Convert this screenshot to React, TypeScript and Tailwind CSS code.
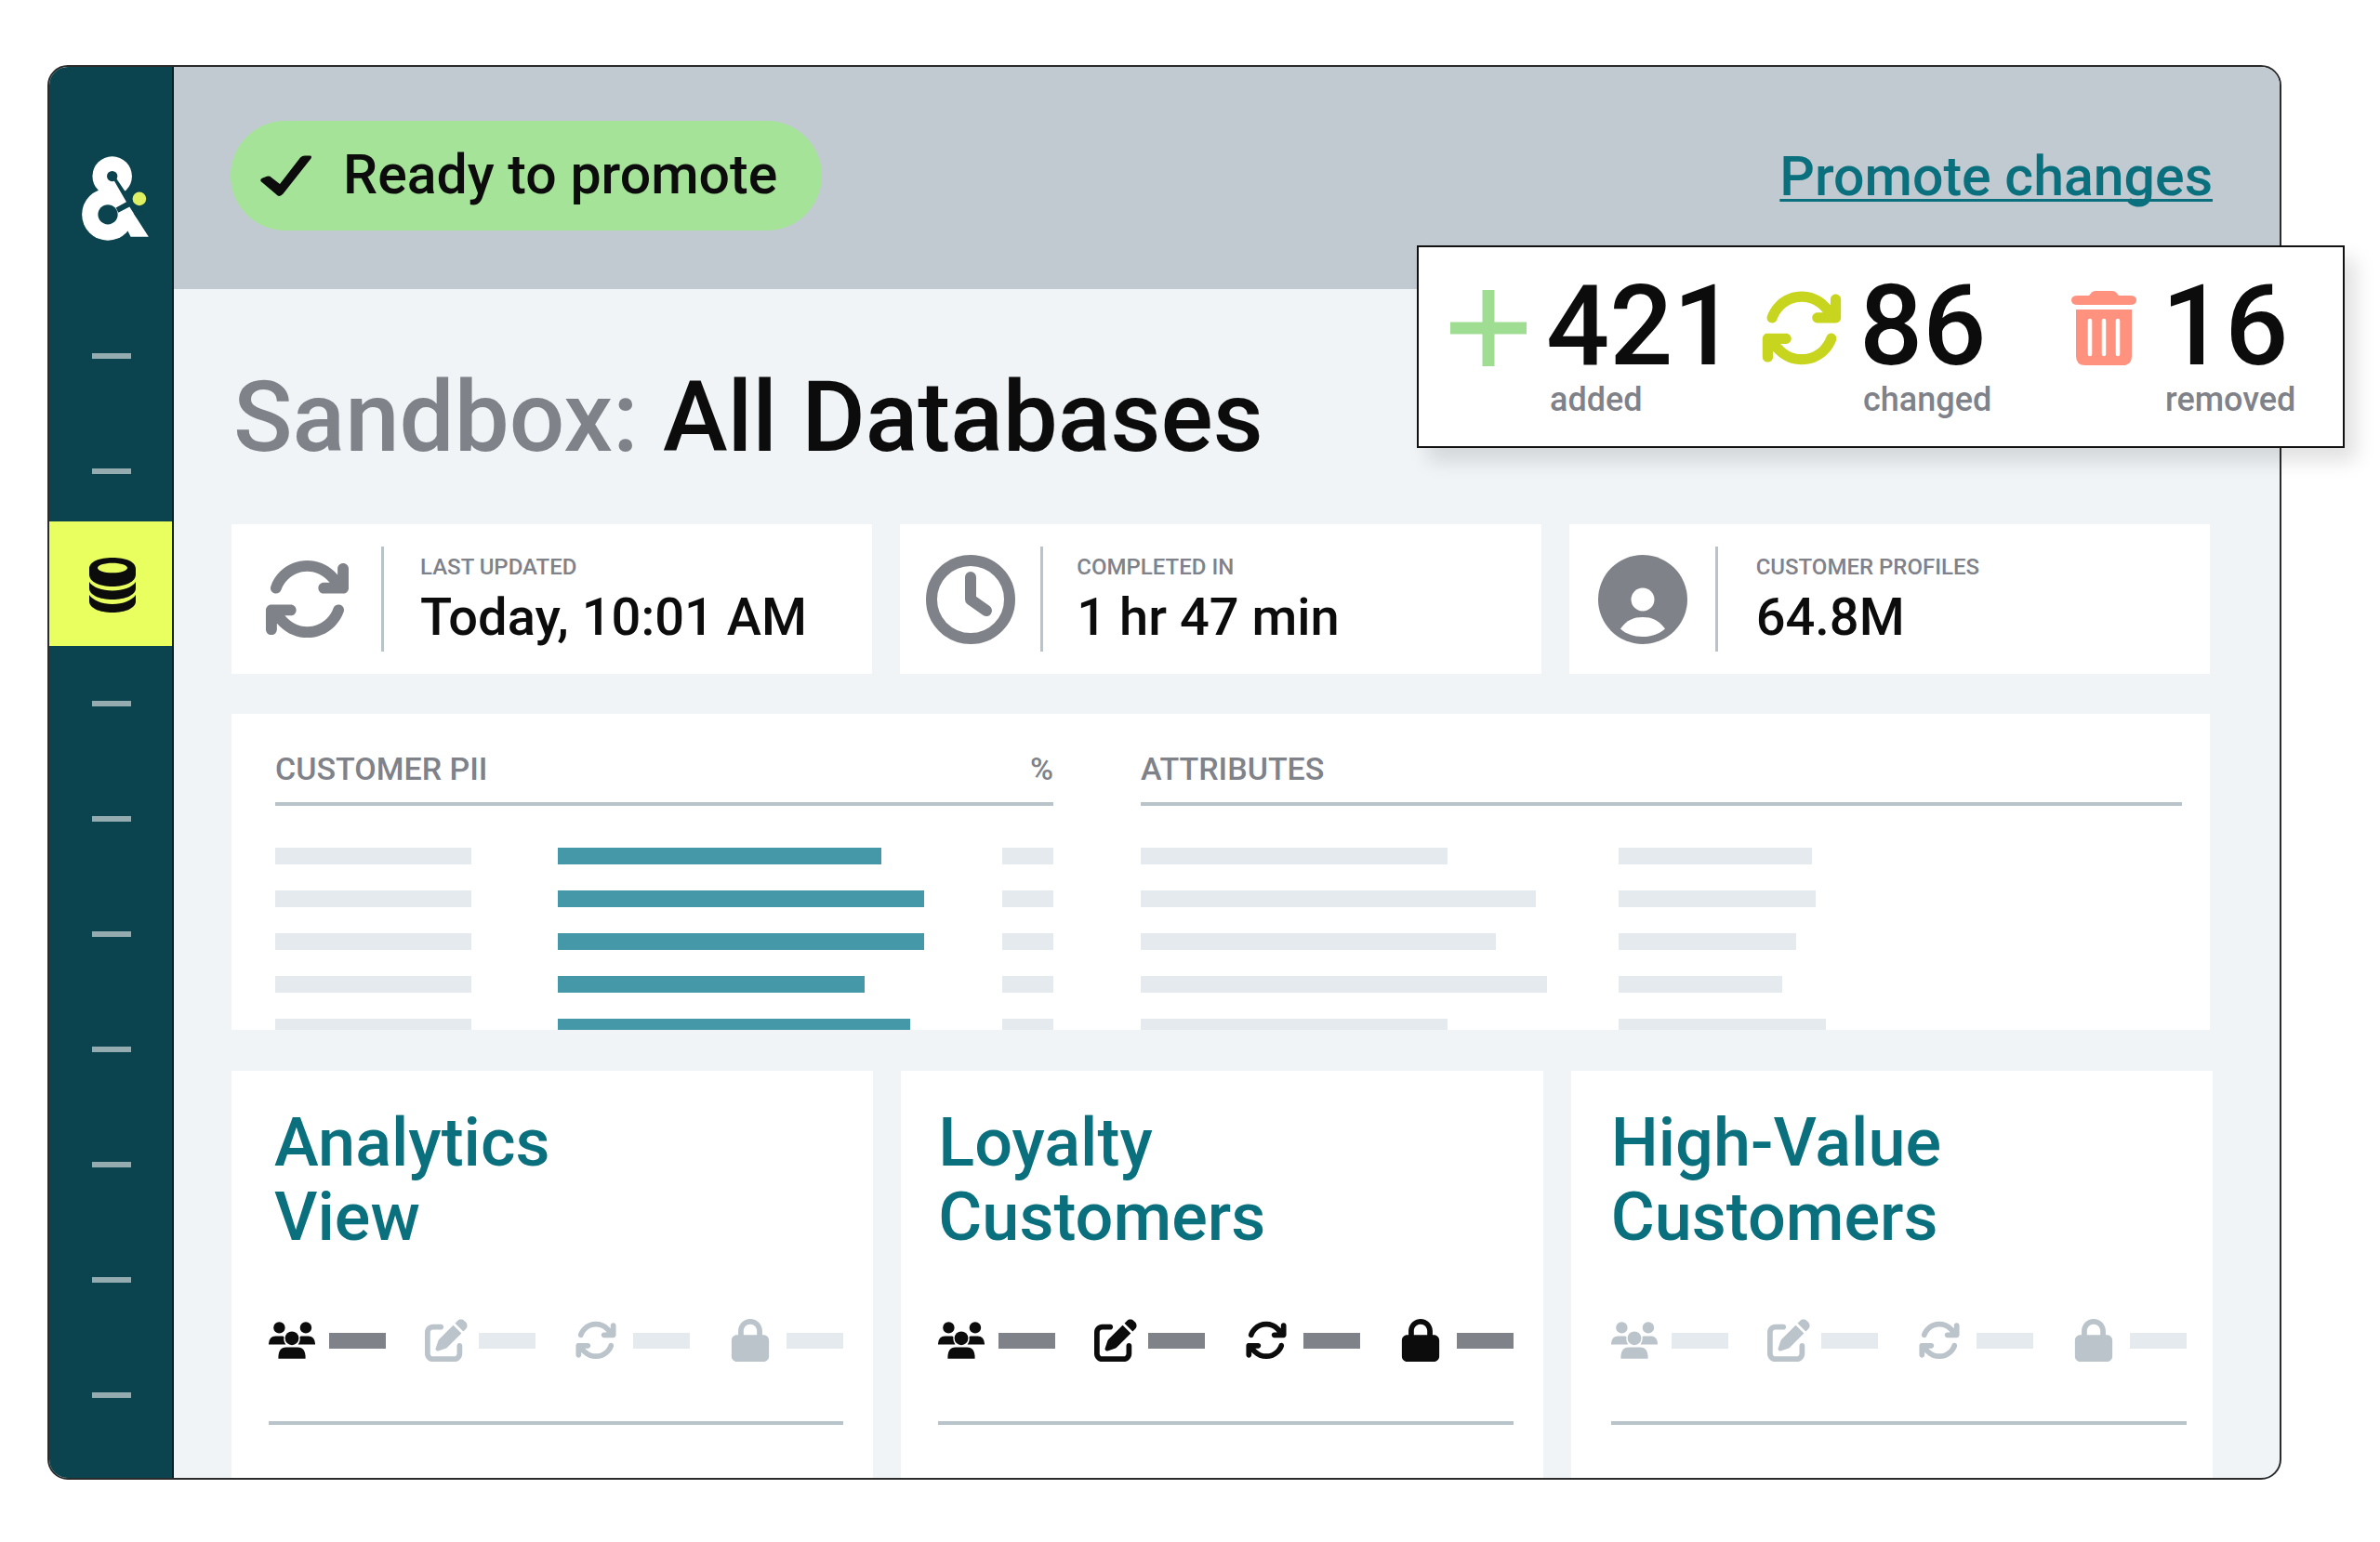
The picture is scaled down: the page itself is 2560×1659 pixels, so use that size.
import { ReactNode } from "react";
import { FaArrowsRotate, FaLock, FaPenToSquare } from "react-icons/fa6";

type IconProps = { className?: string };

function Logo({ className }: IconProps) {
  return (
    <svg viewBox="24 24 216 274" className={className} aria-label="Home">
      <g fill="#fff">
        <circle cx="122" cy="89" r="64" />
        <circle cx="108" cy="213" r="84" />
        <path d="M176 186L240 285H182L172 266L150 220z" />
      </g>
      <g fill="#0b444e">
        <path d="M124 96L168 172L134 191L142 207L178 188L200 222L250 180L163 137L134 94z" />
        <circle cx="122" cy="89" r="17" />
        <circle cx="108" cy="213" r="32" />
      </g>
      <circle cx="210" cy="162" r="22" fill="#dff062" />
    </svg>
  );
}

function DatabaseIcon({ className }: IconProps) {
  return (
    <svg viewBox="0 0 50 59" fill="currentColor" className={className}>
      <path
        fillRule="evenodd"
        d="M0 12C0 4 11 0 25 0S50 4 50 12V18C50 26 39 31 25 31S0 26 0 18zM9 11C9 14 16 16.300 25 16.300S41 14 41 11S34 5.700 25 5.700S9 8 9 11z"
      />
      <path d="M0 26C4 32 14 35.500 25 35.500S46 32 50 26V33C50 40 39 45 25 45S0 40 0 33z" />
      <path d="M0 40C4 46 14 50 25 50S46 46 50 40V47C50 54 39 59 25 59S0 54 0 47z" />
    </svg>
  );
}

function CheckIcon({ className }: IconProps) {
  return (
    <svg viewBox="0 0 55 44" fill="currentColor" className={className}>
      <path d="M.500 28Q-.500 25.500 2.500 24.500L7 22.800Q10 22 12 24L21 31L43 2.500Q45 .500 48 .500H53Q56 .500 54.500 3.500L24.500 41.500Q20.500 46 17 42z" />
    </svg>
  );
}

function PlusIcon({ className }: IconProps) {
  return (
    <svg viewBox="0 0 82 82" fill="currentColor" className={className}>
      <path d="M34.500 0H47.500V34.500H82V47.500H47.500V82H34.500V47.500H0V34.500H34.500z" />
    </svg>
  );
}

function TrashIcon({ className }: IconProps) {
  return (
    <svg viewBox="0 0 70 80" className={className}>
      <g fill="currentColor">
        <path d="M19 5L22 1.500Q23 0 26 0H44Q47 0 48 1.500L51 5H63Q70 5 70 10Q70 15 63 15H7Q0 15 0 10Q0 5 7 5z" />
        <path d="M5 20H65V70Q65 80 55 80H15Q5 80 5 70z" />
      </g>
      <path
        d="M20 32V68M35 32V68M50 32V68"
        stroke="#fff"
        strokeWidth="4.500"
        strokeLinecap="round"
      />
    </svg>
  );
}

function ClockIcon({ className }: IconProps) {
  return (
    <svg
      viewBox="0 0 96 96"
      fill="none"
      stroke="currentColor"
      strokeWidth="12"
      strokeLinecap="round"
      strokeLinejoin="round"
      className={className}
    >
      <circle cx="48" cy="48" r="42" />
      <path d="M48 24V48L65 60" />
    </svg>
  );
}

function ProfileIcon({ className }: IconProps) {
  return (
    <svg viewBox="0 0 96 96" className={className}>
      <circle cx="48" cy="48" r="48" fill="currentColor" />
      <g fill="#fff">
        <circle cx="48" cy="48" r="12.500" />
        <path d="M24 79.500C31 70 38 67 48 67S65 70 72 79.500C66 85 58 88 48 88S30 85 24 79.500z" />
      </g>
    </svg>
  );
}

function PeopleIcon({ className }: IconProps) {
  return (
    <svg viewBox="26 38 149 119" fill="currentColor" className={className}>
      <circle cx="60" cy="57" r="18.500" />
      <circle cx="145" cy="57" r="18.500" />
      <path d="M26 111V108Q28 84 48 84H70Q74 84 75 86Q73 101 81 111z" />
      <path d="M175 111V108Q173 84 153 84H131Q127 84 126 86Q128 101 120 111z" />
      <circle cx="100.500" cy="91" r="22" />
      <path d="M57 156Q56 120 82 120H119Q145 120 144 156z" />
    </svg>
  );
}

function NavDash() {
  return (
    <li>
      <a href="#" aria-label="Section" className="flex h-[124px] items-center justify-center pl-0.5">
        <span className="h-1.5 w-[42px] bg-[#94abb0]" />
      </a>
    </li>
  );
}

function Sidebar() {
  return (
    <aside className="w-[134px] shrink-0 border-r-2 border-[#0c1a1d] bg-[#0b444e] pt-24">
      <Logo className="ml-[35px] h-[91px] w-[72px]" />
      <nav className="mt-[62px]">
        <ul>
          <NavDash />
          <NavDash />
          <li className="-mt-2">
            <a
              href="#"
              aria-label="Databases"
              className="flex h-[134px] items-center justify-center bg-[#e8ff5f] pt-0.5 pl-1"
            >
              <DatabaseIcon className="h-[59px] w-[50px] text-[#0c0c0c]" />
            </a>
          </li>
          {Array.from({ length: 7 }, (_, i) => (
            <NavDash key={i} />
          ))}
        </ul>
      </nav>
    </aside>
  );
}

function Change({ icon, count, label }: { icon: ReactNode; count: number; label: string }) {
  return (
    <div className="flex gap-5">
      <div className="flex h-[82px] w-[84px] items-center justify-center">{icon}</div>
      <div className="-mt-2">
        <div className="text-[120px] leading-[94px]">{count}</div>
        <div className="mt-3 pl-1 text-4xl leading-10 text-[#80828a]">{label}</div>
      </div>
    </div>
  );
}

function ChangesPanel() {
  return (
    <div className="absolute top-[194px] -right-[68px] grid h-[218px] w-[998px] grid-cols-[337px_325px_1fr] border-2 border-[#111] bg-white pt-[46px] pl-[33px] shadow-[12px_14px_20px_rgba(0,0,0,0.12)]">
      <Change icon={<PlusIcon className="size-[82px] text-[#9fdd93]" />} count={421} label="added" />
      <Change icon={<FaArrowsRotate className="size-[90px] shrink-0 text-[#c8d51e]" />} count={86} label="changed" />
      <Change icon={<TrashIcon className="h-20 w-[70px] text-[#ff927f]" />} count={16} label="removed" />
    </div>
  );
}

type StatProps = {
  icon: ReactNode;
  label: string;
  value: string;
  className: string;
  dividerClassName: string;
};

function Stat({ icon, label, value, className, dividerClassName }: StatProps) {
  return (
    <div className={`flex h-[161px] items-center bg-white ${className}`}>
      <div className="flex size-24 shrink-0 items-center justify-center text-[#80828a]">{icon}</div>
      <div className={`h-[113px] w-[3px] bg-[#b9c3ca] ${dividerClassName}`} />
      <div>
        <div className="text-2xl leading-6 text-[#80828a]">{label}</div>
        <div className="mt-3.5 text-[56px] leading-[56px]">{value}</div>
      </div>
    </div>
  );
}

const piiBars = [348, 394, 394, 330, 379];
const attributeBars = [
  [330, 208],
  [425, 212],
  [382, 191],
  [437, 176],
  [330, 223],
];

function Bar({ width, className = "bg-[#e4eaed]" }: { width: number; className?: string }) {
  return <div className={`h-[18px] ${className}`} style={{ width }} />;
}

function DataPanel() {
  return (
    <section className="mt-[43px] mr-[3px] flex h-[340px] items-start gap-[94px] overflow-hidden bg-white pt-[34px] pr-[30px] pl-[47px]">
      <table className="w-[837px] table-fixed">
        <colgroup>
          <col className="w-[304px]" />
          <col />
          <col className="w-[55px]" />
        </colgroup>
        <thead className="border-b-4 border-[#b9c3ca] text-[34px] leading-10 text-[#80828a]">
          <tr>
            <th colSpan={2} className="pt-[5px] pb-4 text-left font-medium">
              CUSTOMER PII
            </th>
            <th className="pt-[5px] pb-4 text-right font-medium">%</th>
          </tr>
        </thead>
        <tbody>
          {piiBars.map((width, i) => (
            <tr key={i} className="[&>td]:pt-7 first:[&>td]:pt-[45px]">
              <td>
                <Bar width={211} />
              </td>
              <td>
                <Bar width={width} className="bg-[#4598a7]" />
              </td>
              <td>
                <Bar width={55} />
              </td>
            </tr>
          ))}
        </tbody>
      </table>

      <table className="flex-1">
        <thead className="border-b-4 border-[#b9c3ca] text-[34px] leading-10 text-[#80828a]">
          <tr>
            <th colSpan={2} className="pt-[5px] pb-4 text-left font-medium">
              ATTRIBUTES
            </th>
          </tr>
        </thead>
        <tbody>
          {attributeBars.map(([first, second], i) => (
            <tr key={i} className="[&>td]:pt-7 first:[&>td]:pt-[45px]">
              <td className="w-[514px]">
                <Bar width={first} />
              </td>
              <td>
                <Bar width={second} />
              </td>
            </tr>
          ))}
        </tbody>
      </table>
    </section>
  );
}

function Feature({ icon, active, className }: { icon: ReactNode; active: boolean; className: string }) {
  return (
    <div className={`flex items-center ${className} ${active ? "text-[#0c0c0c]" : "text-[#bbc4cb]"}`}>
      {icon}
      <span className={`h-[17px] w-[61px] ${active ? "bg-[#80828a]" : "bg-[#e4eaed]"}`} />
    </div>
  );
}

type ViewCardProps = {
  title: [string, string];
  active: [boolean, boolean, boolean, boolean];
  className: string;
  titleClassName?: string;
};

function ViewCard({ title, active, className, titleClassName = "" }: ViewCardProps) {
  return (
    <article className={`bg-white pt-[38px] pb-[57px] ${className}`}>
      <h2 className={`text-[72px] leading-20 text-[#0b707d] ${titleClassName}`}>
        {title[0]}
        <br />
        {title[1]}
      </h2>
      <div className="mt-[67px] flex h-[50px] items-center justify-between">
        <Feature active={active[0]} className="gap-[15px]" icon={<PeopleIcon className="h-10 w-[50px]" />} />
        <Feature active={active[1]} className="gap-3" icon={<FaPenToSquare className="size-[46px]" />} />
        <Feature active={active[2]} className="gap-[17px]" icon={<FaArrowsRotate className="size-[46px]" />} />
        <Feature active={active[3]} className="gap-4" icon={<FaLock className="size-[46px]" />} />
      </div>
      <div className="mt-[62px] h-1 bg-[#b9c3ca]" />
    </article>
  );
}

export default function App() {
  return (
    <main className="min-h-screen bg-white pt-[70px] pr-[106px] pb-[67px] pl-[51px] font-[Roboto,sans-serif] font-medium text-[#0c0c0c]">
      <div className="relative">
        <div className="flex overflow-hidden rounded-[22px] border-2 border-[#2b2b2b] bg-[#f0f4f7]">
          <Sidebar />
          <div className="min-w-0 flex-1">
            <header className="flex h-[239px] items-start justify-between bg-[#c2cad1] pt-[58px] pr-[72px] pl-[61px]">
              <div className="flex h-[118px] items-center gap-[34px] rounded-full bg-[#a5e398] pr-12 pl-8 text-[59px] leading-[116px]">
                <CheckIcon className="h-11 w-[55px]" />
                <span className="pb-0.5">Ready to promote</span>
              </div>
              <a
                href="#"
                className="text-[59px] leading-[120px] text-[#0b707d] underline decoration-3 underline-offset-4"
                style={{ textDecorationSkipInk: "none" }}
              >
                Promote changes
              </a>
            </header>

            <div className="pt-[87px] pr-[72px] pl-[62px]">
              <h1 className="pl-0.5 text-[105px] leading-[104px]">
                <span className="text-[#80828a]">Sandbox:</span> All Databases
              </h1>

              <section className="mt-[62px] mr-[3px] grid grid-cols-3 gap-[30px]">
                <Stat
                  icon={<FaArrowsRotate className="size-[95px]" />}
                  label="LAST UPDATED"
                  value="Today, 10:01 AM"
                  className="pl-[33px]"
                  dividerClassName="mr-[39px] ml-8"
                />
                <Stat
                  icon={<ClockIcon className="size-24" />}
                  label="COMPLETED IN"
                  value="1 hr 47 min"
                  className="pl-7"
                  dividerClassName="mr-9 ml-[27px]"
                />
                <Stat
                  icon={<ProfileIcon className="size-24" />}
                  label="CUSTOMER PROFILES"
                  value="64.8M"
                  className="pl-[31px]"
                  dividerClassName="mr-[41px] ml-[30px]"
                />
              </section>

              <DataPanel />

              <section className="mt-11 grid grid-cols-3 gap-[30px]">
                <ViewCard
                  title={["Analytics", "View"]}
                  active={[true, false, false, false]}
                  className="pr-8 pl-10"
                  titleClassName="pl-1.5"
                />
                <ViewCard
                  title={["Loyalty", "Customers"]}
                  active={[true, true, true, true]}
                  className="pr-8 pl-10"
                />
                <ViewCard
                  title={["High-Value", "Customers"]}
                  active={[false, false, false, false]}
                  className="pr-7 pl-[43px]"
                />
              </section>
            </div>
          </div>
        </div>

        <ChangesPanel />
      </div>
    </main>
  );
}
